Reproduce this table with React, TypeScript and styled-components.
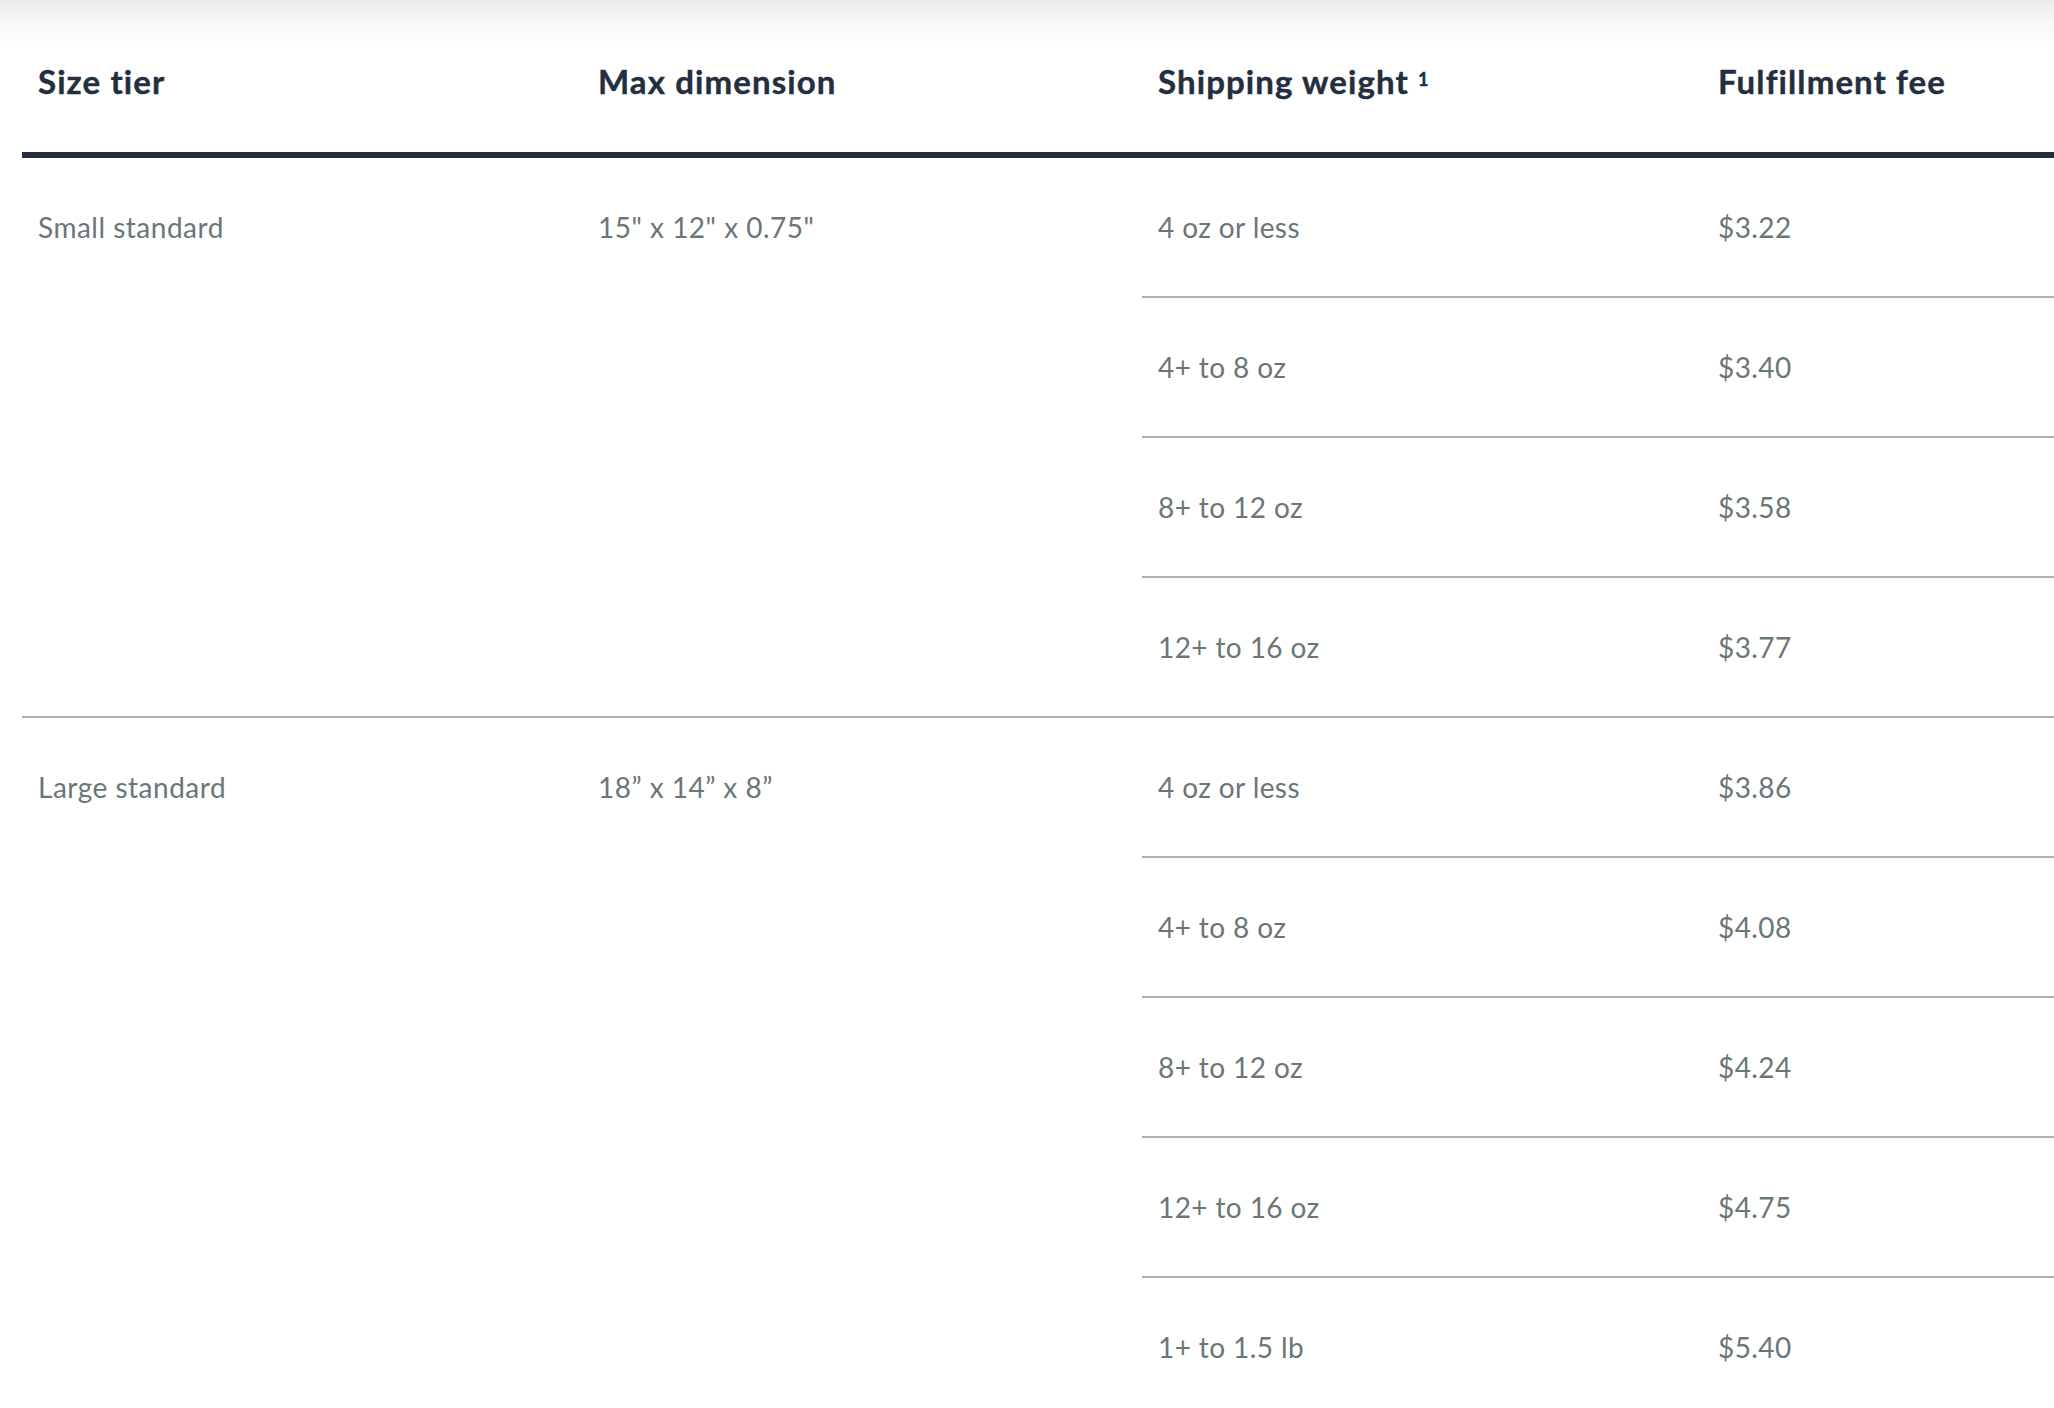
import React from "react";
import styled, { createGlobalStyle } from "styled-components";

const GlobalStyle = createGlobalStyle`
  html, body {
    margin: 0;
    padding: 0;
    overflow: hidden;
    background: linear-gradient(#ebebeb 0px, #f7f7f7 20px, #ffffff 48px) no-repeat, #ffffff;
    font-family: Lato, "Liberation Sans", sans-serif;
  }
`;

const Page = styled.div`
  width: 2054px;
  height: 1408px;
  overflow: hidden;
  padding-left: 22px;
  box-sizing: border-box;
`;

const Table = styled.div`
  display: grid;
  grid-template-columns: repeat(4, 560px);
  width: 2240px;
`;

const HeaderRow = styled.div`
  grid-column: 1 / -1;
  display: grid;
  grid-template-columns: subgrid;
  height: 152px;
  border-bottom: 6px solid #232f3e;
`;

const HeadCell = styled.div`
  display: flex;
  align-items: center;
  padding: 10px 16px 0;
  font-size: 33px;
  font-weight: 700;
  color: #232f3e;
  letter-spacing: 1.1px;
  -webkit-text-stroke: 0.4px #232f3e;
`;

const Sup = styled.sup`
  font-size: 18px;
  margin-left: 9px;
  position: relative;
  top: -2px;
  vertical-align: top;
  line-height: 1;
`;

const Tier = styled.div<{ $first?: boolean }>`
  grid-column: 1 / -1;
  display: grid;
  grid-template-columns: subgrid;
  border-top: ${(p) => (p.$first ? "none" : "2px solid #aab3b3")};
`;

const TierCell = styled.div`
  padding: 52px 16px 0;
  font-size: 28px;
  line-height: 34px;
  letter-spacing: 0.5px;
  color: #6b7677;
`;

const SubRows = styled.div`
  grid-column: 3 / 5;
  display: grid;
  grid-template-columns: subgrid;
`;

const SubRow = styled.div`
  grid-column: 1 / -1;
  display: grid;
  grid-template-columns: subgrid;
  height: 138px;
  & + & {
    border-top: 2px solid #aab3b3;
  }
`;

const Cell = styled.div`
  display: flex;
  align-items: center;
  padding: 0 16px;
  font-size: 28px;
  letter-spacing: 0.4px;
  color: #6b7677;
`;

type TierData = {
  name: string;
  dim: string;
  rows: [string, string][];
};

const tiers: TierData[] = [
  {
    name: "Small standard",
    dim: '15" x 12" x 0.75"',
    rows: [
      ["4 oz or less", "$3.22"],
      ["4+ to 8 oz", "$3.40"],
      ["8+ to 12 oz", "$3.58"],
      ["12+ to 16 oz", "$3.77"],
    ],
  },
  {
    name: "Large standard",
    dim: "18\u201D x 14\u201D x 8\u201D",
    rows: [
      ["4 oz or less", "$3.86"],
      ["4+ to 8 oz", "$4.08"],
      ["8+ to 12 oz", "$4.24"],
      ["12+ to 16 oz", "$4.75"],
      ["1+ to 1.5 lb", "$5.40"],
    ],
  },
];

export default function App() {
  return (
    <>
      <GlobalStyle />
      <Page>
        <Table>
          <HeaderRow>
            <HeadCell>Size tier</HeadCell>
            <HeadCell>Max dimension</HeadCell>
            <HeadCell>
              Shipping weight<Sup>1</Sup>
            </HeadCell>
            <HeadCell>Fulfillment fee</HeadCell>
          </HeaderRow>
          {tiers.map((t, i) => (
            <Tier key={t.name} $first={i === 0}>
              <TierCell>{t.name}</TierCell>
              <TierCell>{t.dim}</TierCell>
              <SubRows>
                {t.rows.map(([w, f]) => (
                  <SubRow key={w}>
                    <Cell>{w}</Cell>
                    <Cell>{f}</Cell>
                  </SubRow>
                ))}
              </SubRows>
            </Tier>
          ))}
        </Table>
      </Page>
    </>
  );
}
